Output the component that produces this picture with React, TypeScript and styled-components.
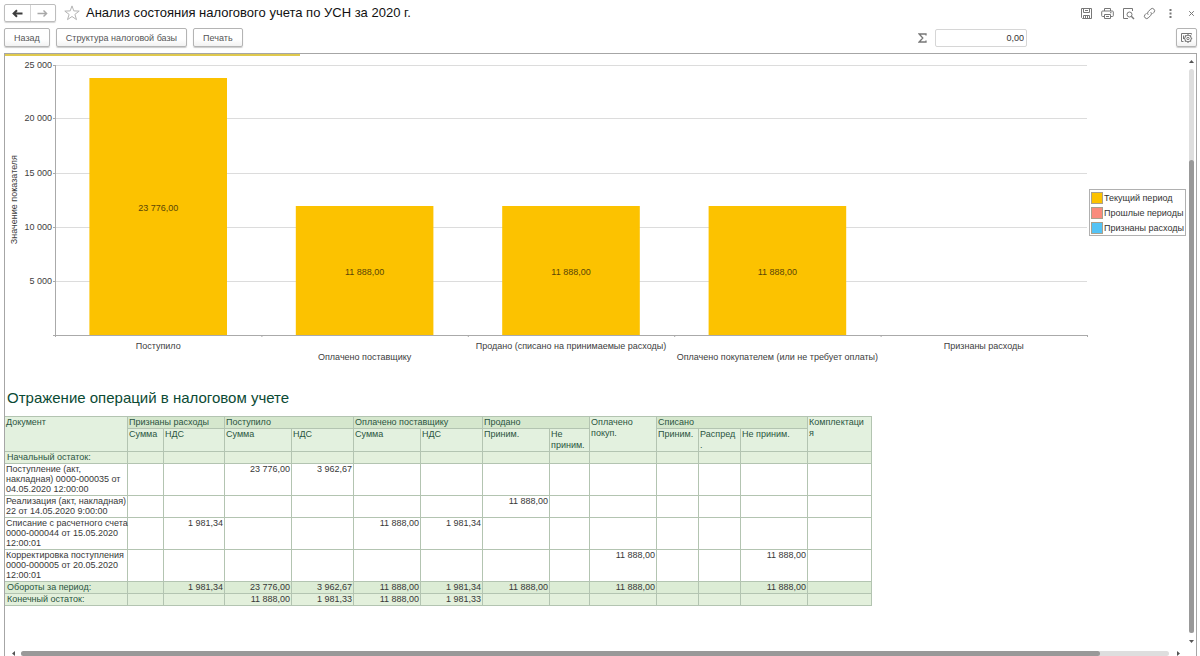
import React from "react";
import styled, { createGlobalStyle } from "styled-components";

const GlobalStyle = createGlobalStyle`
  *, *::before, *::after { box-sizing: border-box; }
  body {
    margin: 0;
    background: #fff;
    color: #404040;
    font: 9px/12px "Liberation Sans", Arial, sans-serif;
  }
  button, input { font: inherit; color: inherit; margin: 0; }
`;

const Shell = styled.div`
  display: flex;
  flex-direction: column;
  height: 100vh;
  overflow: hidden;
  padding: 4px 3px 0 4px;
`;

const TitleBar = styled.header`
  display: flex;
  align-items: center;
  height: 18px;
`;

const NavGroup = styled.div`
  display: flex;
  width: 52px;
  height: 18px;
  border: 1px solid #bdbdbd;
  border-radius: 2px;
  box-shadow: 0 1px 1px #d4d4d4;
`;

const NavButton = styled.button<{ $muted?: boolean }>`
  flex: 1;
  display: flex;
  align-items: center;
  justify-content: center;
  padding: 0;
  border: 0;
  background: none;
  color: ${(p) => (p.$muted ? "#a8a8a8" : "#3c3c3c")};
  & + & { border-left: 1px solid #d4d4d4; }
`;

const IconButton = styled.button`
  display: flex;
  align-items: center;
  justify-content: center;
  width: 21px;
  height: 18px;
  padding: 0;
  border: 0;
  background: none;
  color: #777;
`;

const StarButton = styled(IconButton)`
  width: 16px;
  margin-left: 8px;
  color: #b4b4b4;
`;

const PageTitle = styled.h1`
  flex: 1;
  margin: 0 0 0 6px;
  font-size: 13px;
  line-height: 18px;
  font-weight: 400;
  color: #111;
  white-space: nowrap;
`;

const WindowTools = styled.div`
  display: flex;
  margin-right: -5px;
`;

const CommandBar = styled.div`
  display: flex;
  align-items: center;
  gap: 6px;
  margin-top: 6px;
`;

const CommandButton = styled.button`
  height: 19px;
  padding: 0 9px;
  border: 1px solid #b4b4b4;
  border-radius: 2px;
  background: linear-gradient(#fff 60%, #f2f2f2);
  box-shadow: 0 1px 1px #ccc;
  color: #555;
  white-space: nowrap;
`;

const SumBox = styled.label`
  display: flex;
  align-items: center;
  gap: 8px;
  margin: 0 143px 0 auto;
  color: #777;
`;

const SumInput = styled.input`
  width: 92px;
  height: 18px;
  padding: 0 2px;
  border: 1px solid #d6d6d6;
  border-radius: 2px;
  background: #fff;
  color: #333;
  text-align: right;
`;

const SettingsButton = styled(CommandButton)`
  display: flex;
  align-items: center;
  justify-content: center;
  width: 21px;
  padding: 0;
  color: #777;
`;

const Report = styled.main`
  flex: 1;
  min-height: 0;
  display: flex;
  flex-direction: column;
  margin-top: 6px;
  border: 1px solid #a6a6a6;
  border-bottom: 0;
`;

const ReportBody = styled.div`
  flex: 1;
  min-height: 0;
  display: flex;
`;

const Sheet = styled.div`
  flex: 1;
  min-width: 0;
  overflow: hidden;
`;

const SectionRule = styled.div`
  width: 25%;
  height: 2px;
  background: #dfc94e;
`;

const ChartRow = styled.section`
  display: flex;
  padding: 9px 0 0 3px;
`;

const AxisTitle = styled.div`
  display: flex;
  align-items: center;
  width: 47px;
  height: 270px;
`;

const AxisTitleText = styled.span`
  writing-mode: vertical-rl;
  transform: rotate(180deg);
  white-space: nowrap;
`;

const Plot = styled.svg`
  flex: 1;
  min-width: 0;
  height: 300px;
  overflow: visible;
  fill: #404040;
`;

const Legend = styled.ul`
  align-self: flex-start;
  width: 97px;
  height: 47px;
  margin: 124px 0 0 2px;
  padding: 0 1px;
  list-style: none;
  border: 1px solid #b0b0b0;
`;

const LegendItem = styled.li`
  display: flex;
  align-items: center;
  height: 15px;
  gap: 1px;
  color: #333;
  white-space: nowrap;
`;

const Swatch = styled.span<{ $color: string }>`
  width: 12px;
  height: 12px;
  border: 1px solid #a9a08c;
  background: ${(p) => p.$color};
`;

const SectionTitle = styled.h2`
  margin: 24px 0 9px 2px;
  font-size: 15px;
  line-height: 18px;
  font-weight: 400;
  color: #0b4a34;
`;

const Table = styled.table`
  width: 867px;
  table-layout: fixed;
  border-collapse: separate;
  border-spacing: 0;
  border-top: 1px solid #b3c4b1;
  color: #383838;
`;

const HeadCell = styled.th<{ $group?: boolean }>`
  padding: 0 0 0 1px;
  vertical-align: top;
  text-align: left;
  font-weight: 400;
  line-height: 11px;
  color: #2b5541;
  background: ${(p) => (p.$group ? "#d5e7cd" : "#e3f1df")};
  border-right: 1px solid #b3c4b1;
  border-bottom: 1px solid #b3c4b1;
`;

const Cell = styled.td<{ $tone?: string }>`
  padding: 0 1px 0 0;
  vertical-align: top;
  text-align: right;
  line-height: 11px;
  background: ${(p) => p.$tone || "#fff"};
  border-right: 1px solid #b3c4b1;
  border-bottom: 1px solid #b3c4b1;
`;

const RowTitle = styled.th<{ $tone?: string }>`
  padding: 0 0 0 ${(p) => (p.$tone ? 2 : 1)}px;
  vertical-align: top;
  text-align: left;
  font-weight: 400;
  line-height: ${(p) => (p.$tone ? 11 : 10)}px;
  white-space: pre;
  color: ${(p) => (p.$tone ? "#2b5541" : "#383838")};
  background: ${(p) => p.$tone || "#fff"};
  border-right: 1px solid #b3c4b1;
  border-bottom: 1px solid #b3c4b1;
`;

const Row = styled.tr<{ $height: number }>`
  height: ${(p) => p.$height}px;
`;

const VerticalScroll = styled.div`
  display: flex;
  flex-direction: column;
  align-items: center;
  width: 10px;
  padding: 5px 0 3px;
  color: #555;
`;

const VerticalTrack = styled.div`
  flex: 1;
  width: 5px;
  margin: 5px 0 6px;
  padding-top: 91px;
  border-radius: 3px;
  background: #dedede;
  display: flex;
`;

const HorizontalScroll = styled.div`
  display: flex;
  align-items: center;
  height: 9px;
  padding: 4px 15px 0 6px;
  color: #555;
`;

const HorizontalTrack = styled.div`
  flex: 1;
  height: 5px;
  margin: 0 7px 0 5px;
  border-radius: 3px;
  background: #dedede;
  display: flex;
`;

const Thumb = styled.div<{ $length: string }>`
  flex: 0 0 ${(p) => p.$length};
  border-radius: 3px;
  background: #999;
`;

const Arrow = ({ d }: { d: string }) => (
  <svg width="5" height="5" viewBox="0 0 5 5" fill="currentColor" aria-hidden="true">
    <path d={d} />
  </svg>
);

const Icon = ({ children, size = 13 }: { children: React.ReactNode; size?: number }) => (
  <svg
    width={size}
    height={size}
    viewBox="0 0 13 13"
    fill="none"
    stroke="currentColor"
    strokeWidth="1"
    strokeLinejoin="round"
    aria-hidden="true"
  >
    {children}
  </svg>
);

const categories = [
  { name: "Поступило", value: 23776, label: "23 776,00" },
  { name: "Оплачено поставщику", value: 11888, label: "11 888,00" },
  { name: "Продано (списано на принимаемые расходы)", value: 11888, label: "11 888,00" },
  { name: "Оплачено покупателем (или не требует оплаты)", value: 11888, label: "11 888,00" },
  { name: "Признаны расходы", value: 0, label: "" },
];

const ticks = [
  { value: 25000, label: "25 000" },
  { value: 20000, label: "20 000" },
  { value: 15000, label: "15 000" },
  { value: 10000, label: "10 000" },
  { value: 5000, label: "5 000" },
];

const PLOT_HEIGHT = 270;
const MAX_VALUE = 25000;
const step = 100 / categories.length;
const yOf = (v: number) => Math.floor(PLOT_HEIGHT * (1 - v / MAX_VALUE));

const Chart = () => (
  <Plot role="img" aria-label="Значение показателя">
    {ticks.map((t) => (
      <g key={t.value}>
        <rect x="0" y={yOf(t.value)} width="100%" height="1" fill="#dcdcdc" />
        <rect x="-2" y={yOf(t.value)} width="3" height="1" fill="#aaa" />
        <text x="-3" y={yOf(t.value) + 3} textAnchor="end">{t.label}</text>
      </g>
    ))}
    {categories.map((c, i) => {
      const top = yOf(c.value);
      const center = `${(i + 0.5) * step}%`;
      return (
        <g key={c.name}>
          {c.value > 0 && (
            <rect
              x={`${(i + 1 / 6) * step}%`}
              y={top}
              width={`${(step * 2) / 3}%`}
              height={PLOT_HEIGHT - top}
              fill="#fcc200"
            />
          )}
          <text x={center} y={Math.floor((top + PLOT_HEIGHT) / 2) + 5} textAnchor="middle" fill="#5a4508">
            {c.label}
          </text>
          <text x={center} y={i % 2 ? 295 : 284} textAnchor="middle">{c.name}</text>
          <rect x={`${(i + 1) * step}%`} y={PLOT_HEIGHT} width="1" height="2" fill="#aaa" />
        </g>
      );
    })}
    <rect x="0" y="0" width="1" height={PLOT_HEIGHT + 2} fill="#aaa" />
    <rect x="0" y={PLOT_HEIGHT} width="100%" height="1" fill="#aaa" />
    <rect x="-2" y={PLOT_HEIGHT} width="3" height="1" fill="#aaa" />
  </Plot>
);

const legend = [
  { name: "Текущий период", color: "#fcc200" },
  { name: "Прошлые периоды", color: "#f98b7c" },
  { name: "Признаны расходы", color: "#55c3f5" },
];

const columnWidths = [123, 36, 61, 67, 62, 67, 62, 67, 40, 67, 42, 42, 67, 64];

type RowData = { title: string; height: number; tone?: string; values: Record<number, string> };

const rows: RowData[] = [
  { title: "Начальный остаток:", height: 12, tone: "#e3f0dc", values: {} },
  {
    title: "Поступление (акт,\nнакладная) 0000-000035 от\n04.05.2020 12:00:00",
    height: 32,
    values: { 3: "23 776,00", 4: "3 962,67" },
  },
  {
    title: "Реализация (акт, накладная)\n22 от 14.05.2020 9:00:00",
    height: 22,
    values: { 7: "11 888,00" },
  },
  {
    title: "Списание с расчетного счета\n0000-000044 от 15.05.2020\n12:00:01",
    height: 32,
    values: { 2: "1 981,34", 5: "11 888,00", 6: "1 981,34" },
  },
  {
    title: "Корректировка поступления\n0000-000005 от 20.05.2020\n12:00:01",
    height: 32,
    values: { 9: "11 888,00", 12: "11 888,00" },
  },
  {
    title: "Обороты за период:",
    height: 12,
    tone: "#dcecd5",
    values: {
      2: "1 981,34", 3: "23 776,00", 4: "3 962,67", 5: "11 888,00",
      6: "1 981,34", 7: "11 888,00", 9: "11 888,00", 12: "11 888,00",
    },
  },
  {
    title: "Конечный остаток:",
    height: 12,
    tone: "#e3f0dc",
    values: { 3: "11 888,00", 4: "1 981,33", 5: "11 888,00", 6: "1 981,33" },
  },
];

const OperationsTable = () => (
  <Table>
    <colgroup>
      {columnWidths.map((w, i) => (
        <col key={i} width={w} />
      ))}
    </colgroup>
    <thead>
      <Row $height={12}>
        <HeadCell rowSpan={2}>Документ</HeadCell>
        <HeadCell $group colSpan={2}>Признаны расходы</HeadCell>
        <HeadCell $group colSpan={2}>Поступило</HeadCell>
        <HeadCell $group colSpan={2}>Оплачено поставщику</HeadCell>
        <HeadCell $group colSpan={2}>Продано</HeadCell>
        <HeadCell rowSpan={2}>Оплачено<br />покуп.</HeadCell>
        <HeadCell $group colSpan={3}>Списано</HeadCell>
        <HeadCell rowSpan={2}>Комплектаци<br />я</HeadCell>
      </Row>
      <Row $height={23}>
        <HeadCell>Сумма</HeadCell>
        <HeadCell>НДС</HeadCell>
        <HeadCell>Сумма</HeadCell>
        <HeadCell>НДС</HeadCell>
        <HeadCell>Сумма</HeadCell>
        <HeadCell>НДС</HeadCell>
        <HeadCell>Приним.</HeadCell>
        <HeadCell>Не<br />приним.</HeadCell>
        <HeadCell>Приним.</HeadCell>
        <HeadCell>Распред<br />.</HeadCell>
        <HeadCell>Не приним.</HeadCell>
      </Row>
    </thead>
    <tbody>
      {rows.map((r) => (
        <Row key={r.title} $height={r.height}>
          <RowTitle scope="row" $tone={r.tone}>{r.title}</RowTitle>
          {columnWidths.slice(1).map((_, i) => (
            <Cell key={i} $tone={r.tone}>{r.values[i + 1]}</Cell>
          ))}
        </Row>
      ))}
    </tbody>
  </Table>
);

export default function App() {
  return (
    <>
      <GlobalStyle />
      <Shell>
        <TitleBar>
          <NavGroup>
            <NavButton aria-label="Назад">
              <svg width="11" height="9" viewBox="0 0 11 9" fill="none" stroke="currentColor" strokeWidth="2">
                <path d="M10.500 4.500H2M5 1.200L1.600 4.500L5 7.800" />
              </svg>
            </NavButton>
            <NavButton $muted aria-label="Вперед">
              <svg width="11" height="9" viewBox="0 0 11 9" fill="none" stroke="currentColor" strokeWidth="1.400">
                <path d="M.5 4.500H9.500M6.500 1.500L9.600 4.500L6.500 7.500" />
              </svg>
            </NavButton>
          </NavGroup>
          <StarButton aria-label="В избранное">
            <svg width="16" height="16" viewBox="0 0 16 16" fill="none" stroke="currentColor" strokeWidth="1">
              <path d="M8 .9L9.800 5.900L15.200 6.100L10.900 9.400L12.500 14.600L8 11.500L3.500 14.600L5.100 9.400L.8 6.100L6.200 5.900Z" />
            </svg>
          </StarButton>
          <PageTitle>Анализ состояния налогового учета по УСН за 2020 г.</PageTitle>
          <WindowTools>
            <IconButton aria-label="Сохранить">
              <Icon>
                <path d="M1.500 1.500H11.500V11.500H2.500L1.500 10.500Z" />
                <path d="M3.500 1.500V5.500H9.500V1.500M5 3.500H8M3.500 11.500V8.500H9.500V11.500M5.500 9V11.500M7.500 9V11.500" />
              </Icon>
            </IconButton>
            <IconButton aria-label="Печать документа">
              <Icon>
                <path d="M3.500 4V1.500H9.500V4M3 9.500H1.500A.8.8 0 0 1 .7 8.700V5A1 1 0 0 1 1.700 4H11.300A1 1 0 0 1 12.300 5V8.700A.8.8 0 0 1 11.500 9.500H10" />
                <path d="M3.500 7.500H9.500V11.500H3.500ZM5 9.500H8M9 5.700H10.500" />
              </Icon>
            </IconButton>
            <IconButton aria-label="Предварительный просмотр">
              <Icon>
                <path d="M6 11.500H1.500V1.500H10.500V4" />
                <circle cx="7.500" cy="7.500" r="2.500" />
                <path d="M9.300 9.300L12 12" strokeWidth="1.400" />
              </Icon>
            </IconButton>
            <IconButton aria-label="Получить ссылку">
              <Icon>
                <path d="M5.200 7.800A2.300 2.300 0 0 1 5.200 4.700L7.700 2.100A2.300 2.300 0 0 1 11 5.300L9.500 6.800M7.800 5.200A2.300 2.300 0 0 1 7.800 8.300L5.300 10.900A2.300 2.300 0 0 1 2 7.700L3.500 6.200" />
              </Icon>
            </IconButton>
            <IconButton aria-label="Еще">
              <Icon>
                <path d="M5.500 2H7.500V4H5.500ZM5.500 5.500H7.500V7.500H5.500ZM5.500 9H7.500V11H5.500Z" fill="currentColor" stroke="none" />
              </Icon>
            </IconButton>
            <IconButton aria-label="Закрыть">
              <Icon>
                <path d="M4.200 4.200L8.800 8.800M8.800 4.200L4.200 8.800" />
              </Icon>
            </IconButton>
          </WindowTools>
        </TitleBar>

        <CommandBar>
          <CommandButton>Назад</CommandButton>
          <CommandButton>Структура налоговой базы</CommandButton>
          <CommandButton>Печать</CommandButton>
          <SumBox>
            <svg width="9" height="10" viewBox="0 0 9 10" fill="none" stroke="currentColor" strokeWidth="1.300" role="img" aria-label="Сумма">
              <path d="M8 2.500V1H1.200L4.800 5L1.200 9H8V7.500" />
            </svg>
            <SumInput defaultValue="0,00" readOnly />
          </SumBox>
          <SettingsButton aria-label="Настройки">
            <Icon>
              <path d="M3.500 10.500H1.500V2.500H11.500V3.500M3.500 4.500V8" />
              <circle cx="8" cy="7.500" r="3.300" />
              <circle cx="8" cy="7.500" r="1.200" />
              <path d="M8 3.300V4.300M8 10.700V11.700M3.800 7.500H4.800M11.200 7.500H12.200M5 4.500L5.700 5.200M11 4.500L10.300 5.200M5 10.500L5.700 9.800M11 10.500L10.300 9.800" strokeWidth="1.400" />
            </Icon>
          </SettingsButton>
        </CommandBar>

        <Report>
          <ReportBody>
            <Sheet>
              <SectionRule />
              <ChartRow>
                <AxisTitle>
                  <AxisTitleText>Значение показателя</AxisTitleText>
                </AxisTitle>
                <Chart />
                <Legend>
                  {legend.map((l) => (
                    <LegendItem key={l.name}>
                      <Swatch $color={l.color} />
                      {l.name}
                    </LegendItem>
                  ))}
                </Legend>
              </ChartRow>
              <SectionTitle>Отражение операций в налоговом учете</SectionTitle>
              <OperationsTable />
            </Sheet>
            <VerticalScroll>
              <Arrow d="M2.500 1L5 4H0Z" />
              <VerticalTrack>
                <Thumb $length="100%" />
              </VerticalTrack>
              <Arrow d="M0 1H5L2.500 4Z" />
            </VerticalScroll>
          </ReportBody>
          <HorizontalScroll>
            <Arrow d="M4 0V5L1 2.500Z" />
            <HorizontalTrack>
              <Thumb $length="94%" />
            </HorizontalTrack>
            <Arrow d="M1 0L4 2.500L1 5Z" />
          </HorizontalScroll>
        </Report>
      </Shell>
    </>
  );
}
